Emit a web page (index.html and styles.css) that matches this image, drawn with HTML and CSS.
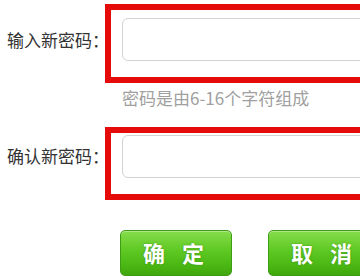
FILE: index.html
```html
<!DOCTYPE html>
<html lang="zh-CN">
<head>
<meta charset="utf-8">
<link rel="stylesheet" href="styles.css">
</head>
<body>
<div class="form">
  <div class="row row-first">
    <label class="label label-first">输入新密码：</label>
    <div class="frame frame-first"><input class="field" type="password"></div>
  </div>
  <div class="hint">密码是由6-16个字符组成</div>
  <div class="row row-second">
    <label class="label label-second">确认新密码：</label>
    <div class="frame frame-second"><input class="field" type="password"></div>
  </div>
  <div class="actions">
    <button class="btn">确定</button>
    <button class="btn">取消</button>
  </div>
</div>
</body>
</html>
```

FILE: styles.css
```css
html, body {
  margin: 0;
  padding: 0;
  background: #ffffff;
  overflow: hidden;
}
body {
  width: 360px;
  height: 280px;
  font-family: "Noto Sans CJK SC", "Noto Sans", sans-serif;
}
.form {
  width: 600px;
}
.row {
  display: flex;
  align-items: flex-start;
}
.row-first {
  margin-top: 4px;
}
.row-second {
  margin-top: 19px;
}
.label {
  width: 98px;
  margin-left: 7px;
  font-size: 17px;
  line-height: 24px;
  color: #333333;
  white-space: nowrap;
}
.label-first {
  margin-top: 24px;
}
.label-second {
  margin-top: 17px;
}
.frame {
  box-sizing: border-box;
  width: 400px;
  border: 6px solid #e50b0b;
  padding-left: 11px;
}
.frame-first {
  padding-top: 8px;
  padding-bottom: 16px;
}
.frame-second {
  padding-top: 2px;
  padding-bottom: 16px;
}
.field {
  display: block;
  box-sizing: border-box;
  width: 400px;
  height: 43px;
  margin: 0;
  border: 1px solid #d2d2d2;
  border-radius: 6px;
  background: #ffffff;
  outline: none;
}
.hint {
  margin-top: 5px;
  padding-left: 122px;
  font-size: 17px;
  line-height: 20px;
  color: #a0a0a0;
  white-space: nowrap;
}
.actions {
  display: flex;
  gap: 36px;
  margin-top: 30px;
  padding-left: 120px;
}
.btn {
  box-sizing: border-box;
  flex: none;
  width: 112px;
  height: 46px;
  margin: 0;
  padding: 0 0 2px 12px;
  border: 1px solid #3f9c17;
  border-radius: 5px;
  background: linear-gradient(to bottom, #86dc4c 0%, #62cb26 40%, #4cb914 75%, #3fa70c 100%);
  color: #ffffff;
  font-family: "Noto Sans CJK SC", sans-serif;
  font-size: 22px;
  font-weight: 700;
  letter-spacing: 17px;
  line-height: 28px;
  text-shadow: 0 0 2px rgba(40, 110, 10, 0.6);
  box-shadow: inset 0 1px 0 rgba(255, 255, 255, 0.35);
}
```
